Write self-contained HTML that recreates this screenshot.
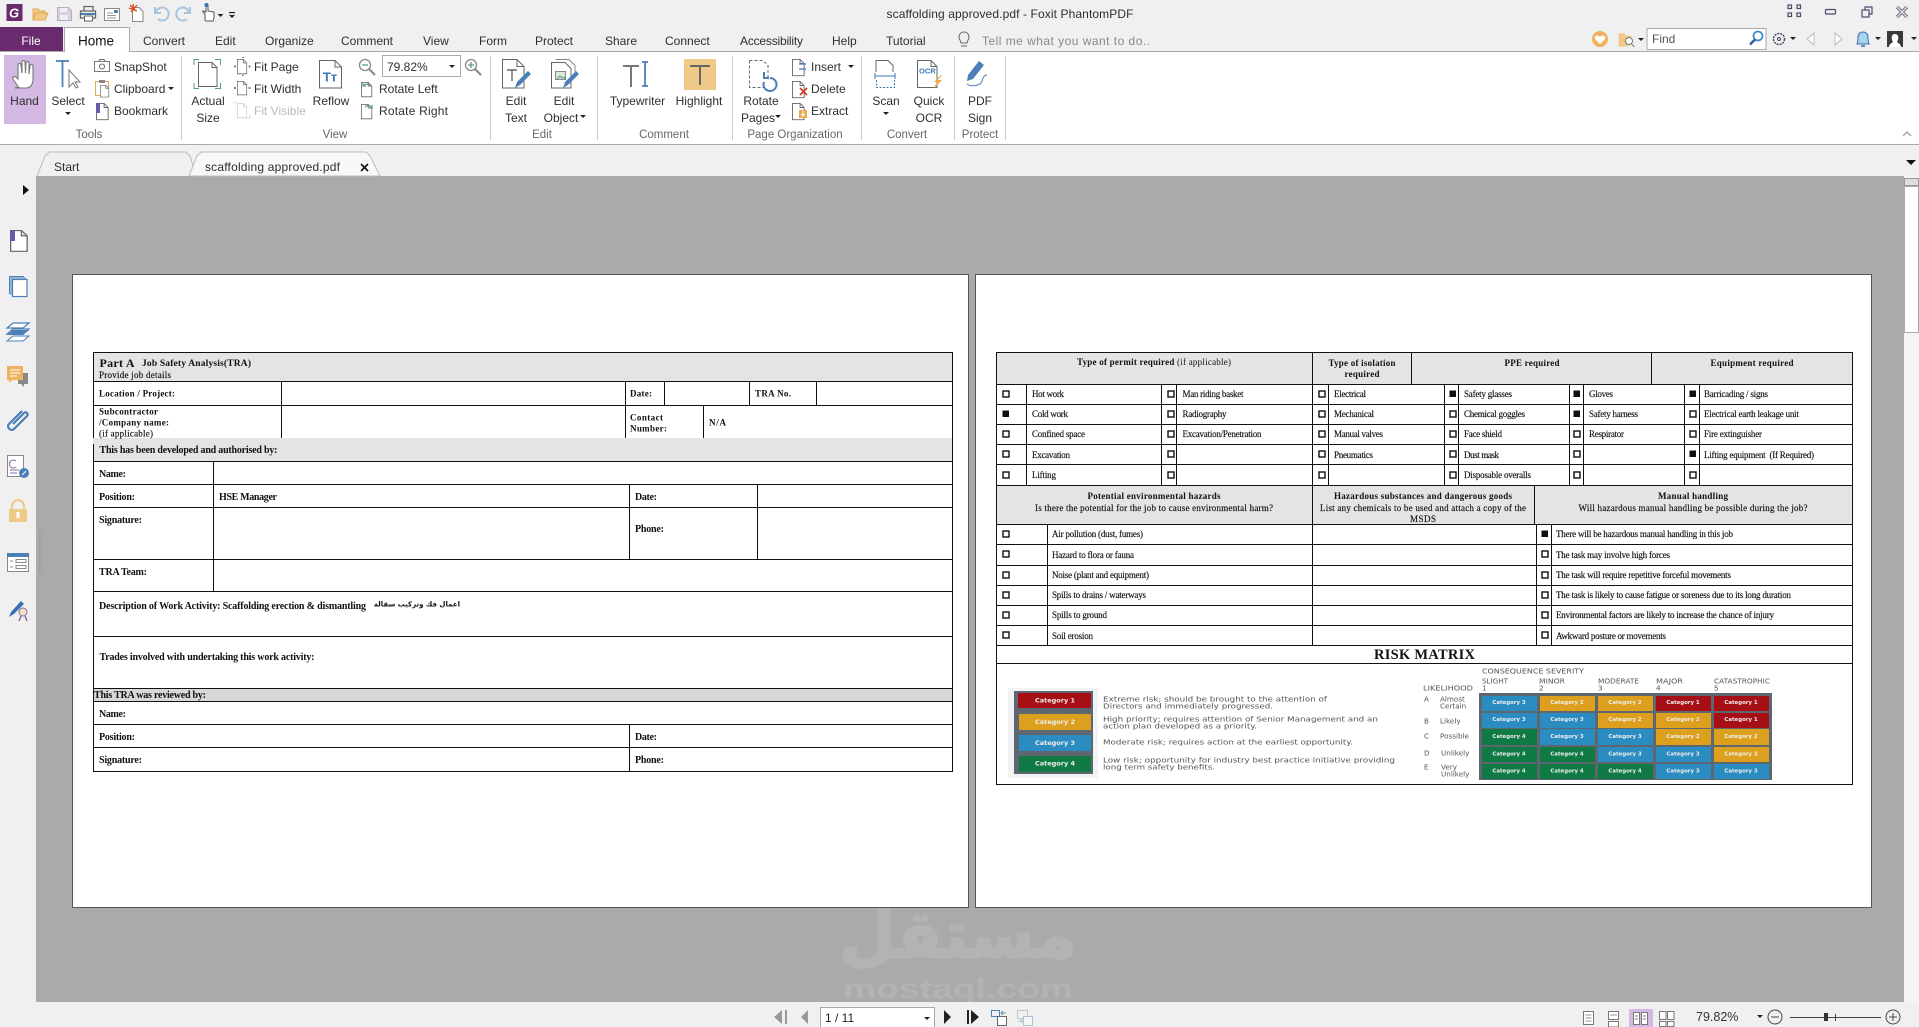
<!DOCTYPE html>
<html lang="en"><head><meta charset="utf-8"><title>scaffolding approved.pdf - Foxit PhantomPDF</title>
<style>
html,body{margin:0;padding:0;background:#f0f0f0;overflow:hidden}
#a{position:relative;width:1919px;height:1027px;overflow:hidden;background:#f0f0f0}
svg{position:absolute;left:0;top:0}
text{white-space:pre}
.u{font:12px "Liberation Sans",sans-serif;fill:#2e2e2e;dominant-baseline:central}
.g{font:11.5px "Liberation Sans",sans-serif;fill:#666;dominant-baseline:central;text-anchor:middle}
text.u[y="40"],text.u[y="66"],text.u[y="88"],text.u[y="110"],text.u[y="100"],text.u[y="117"],text.g[y="134"]{transform:translateY(1px)}
.c{text-anchor:middle}
.b{font:bold 10px "Liberation Serif",serif;fill:#111;dominant-baseline:central}
.r{font:9px "Liberation Serif",serif;fill:#111;dominant-baseline:central;stroke:#111;stroke-width:.15px}
.h{font:bold 9px "Liberation Serif",serif;fill:#111;dominant-baseline:central}
.d{font:7.2px "DejaVu Sans",sans-serif;fill:#555;dominant-baseline:central}
.e{font:bold 5.400px "DejaVu Sans",sans-serif;fill:#eee;dominant-baseline:central;text-anchor:middle}
.l{stroke:#111;stroke-width:1;fill:none}
.k{fill:none;stroke:#111;stroke-width:1.4}
.i{fill:none;stroke:#666;stroke-width:1}
</style></head><body><div id="a">
<svg width="1919" height="1027" viewBox="0 0 1919 1027" xmlns="http://www.w3.org/2000/svg">
<defs>
<path id="doc" d="M.5.5H9L13.5 5V18.5H.5Z M9 .5V5H13.5" fill="#fff" stroke="#666"/>
<path id="tr" d="M0 0h6l-3 3z" fill="#222"/>
<g id="bx"><rect x="-3" y="-3" width="6" height="6" class="k"/></g>
<g id="bf"><rect x="-3.5" y="-3.5" width="6.5" height="6.5" fill="#111"/></g>
<clipPath id="wm"><rect x="36" y="908" width="1868" height="94"/></clipPath>
</defs>

<!-- chrome -->
<rect x="0" y="52" width="1919" height="92" fill="#fff"/>
<rect x="0" y="51" width="1919" height="1" fill="#aaa"/>
<rect x="0" y="144" width="1919" height="1" fill="#aaa"/>
<rect x="36" y="176" width="1868" height="826" fill="#aaa"/>
<rect x="0" y="27" width="63" height="24" fill="#6a2a6e"/>
<path d="M64.500 52V27.500H129.500V52" fill="#fff" stroke="#aaa"/>
<rect x="65" y="50" width="64" height="3" fill="#fff"/>
<text class="u c" x="31" y="40" style="fill:#fff">File</text>
<text class="u c" x="96" y="41" style="font-size:13.500px;fill:#111">Home</text>
<text class="u" x="143" y="40">Convert</text><text class="u" x="215" y="40">Edit</text><text class="u" x="265" y="40">Organize</text><text class="u" x="341" y="40">Comment</text><text class="u" x="423" y="40">View</text><text class="u" x="479" y="40">Form</text><text class="u" x="535" y="40">Protect</text><text class="u" x="605" y="40">Share</text><text class="u" x="665" y="40">Connect</text><text class="u" x="740" y="40" textLength="63">Accessibility</text><text class="u" x="832" y="40">Help</text><text class="u" x="886" y="40">Tutorial</text>
<text class="u" x="982" y="40" style="fill:#888" textLength="168">Tell me what you want to do..</text>
<path d="M961 46h6M960.500 41c-3-4-1-9 3.500-9s6.500 5 3.500 9l-.5 2h-6z" class="i"/>
<text class="u c" x="1010" y="14" textLength="247">scaffolding approved.pdf - Foxit PhantomPDF</text>

<!-- quick access -->
<rect x="6.500" y="4" width="16" height="17" fill="#6a2a6e"/><text x="14" y="13" style="font:italic bold 13px 'Liberation Sans',sans-serif;fill:#fff;dominant-baseline:central;text-anchor:middle">G</text>
<path d="M33 19V9h5l2 2h5v3M33 20l3-7h12l-3 7z" fill="#f2c987" stroke="#e5a955"/>
<path d="M57.500 7.500h11l3 3v10h-14z" fill="#d8cfe0" stroke="#b9a8c8"/><rect x="60" y="8" width="7" height="4" fill="#f0f0f0"/><rect x="60" y="15" width="8" height="5" fill="#f0f0f0"/>
<path d="M84 11V6.500h9V11M84 18h-3.500v-7h15v7H92" fill="#eee" stroke="#666" stroke-width="1.300"/><rect x="81" y="13" width="14" height="2" fill="#4a7fb8"/><rect x="84.500" y="16" width="8" height="5" fill="#fff" stroke="#666"/>
<rect x="104.500" y="8.500" width="15" height="12" fill="#fff" stroke="#888"/><path d="M107 13h6M107 15.500h9M107 18h9" stroke="#999"/><rect x="114" y="10" width="4" height="3" fill="#4a7fb8"/>
<path d="M132.500 7.500H139l4 4v10h-10.500z" fill="#fff" stroke="#888"/><path d="M133 4l1 6M129 8l8 3M137 5l-6 7M130 5l5 5" stroke="#d84a1e" stroke-width="1.300"/>
<path d="M156 12a6.500 6.500 0 1 1 2 7M155 7v6h6" fill="none" stroke="#a9c5dd" stroke-width="2"/>
<path d="M189 12a6.500 6.500 0 1 0-2 7M190 7v6h-6" fill="none" stroke="#a9c5dd" stroke-width="2"/>
<path d="M205 20v-6l-2-2v-1l3 1V5h2v6l6 1v6l-1 3h-7z" fill="#fff" stroke="#555"/><circle cx="206.500" cy="5" r="2" fill="#3a6fb0"/>
<use href="#tr" x="217.500" y="14"/><use href="#tr" x="229" y="15"/><rect x="229" y="12" width="6" height="1.200" fill="#222"/>

<!-- ribbon -->
<rect x="4" y="55" width="42" height="69" fill="#d4b8e4"/>
<path d="M19 88l-6-9c-1-2 1-3 3-2l2 2V65c0-2 3-2 3 0l1 8V62c0-2 3-2 3 0l.5 11 .5-10c0-2 3-2 3 0l0 11 1-8c0-2 3-2 3 0v13c0 6-3 9-7 9h-5c-2 0-4-1-6-0z" fill="#fff" stroke="#777" stroke-width="1.100"/>
<text class="u c" x="24.500" y="100">Hand</text>
<path d="M56 61h13M62.500 61v26" stroke="#4a7fb8" stroke-width="1.800" fill="none"/><path d="M69 70v17l4-4 3 5 2-1-3-5h5z" fill="#fff" stroke="#777"/>
<text class="u c" x="68" y="100">Select</text><use href="#tr" x="65" y="112"/>
<rect x="94.500" y="61.500" width="15" height="10" fill="#fff" stroke="#777"/><circle cx="102" cy="66.500" r="2.500" class="i"/><path d="M99 61.500l1-2h4l1 2" class="i"/>
<rect x="95.500" y="81.500" width="13" height="14" fill="#fff" stroke="#e5a955"/><rect x="99" y="80" width="6" height="3" fill="#888"/><use href="#doc" transform="translate(100 85) scale(.65)"/>
<use href="#doc" transform="translate(96 103) scale(.9)"/><rect x="96" y="103" width="4" height="10" fill="#6b5aa8"/>
<text class="u" x="114" y="66">SnapShot</text><text class="u" x="114" y="88">Clipboard</text><use href="#tr" x="168" y="87"/><text class="u" x="114" y="110">Bookmark</text>
<text class="g" x="89" y="134">Tools</text>
<path d="M181.500 56v84M490.500 56v84M597.500 56v84M732.500 56v84M861.500 56v84M954.500 56v84M1005.500 56v84" stroke="#ccc"/>

<path d="M194 65v-5.500h5M215 59.500h5.500v5.500M194 83v5.500h5M220.500 83v5.500H215" fill="none" stroke="#5a9a8a"/>
<path d="M198.500 62.500H212l5 5v19h-18.500z M212 62.500v5h5" fill="#fff" stroke="#666"/>
<text class="u c" x="208" y="100">Actual</text><text class="u c" x="208" y="117">Size</text>
<use href="#doc" transform="translate(237 59) scale(.72 .8)"/><path d="M234 66.500h2M248.500 66.500h2M243 58v-1M243 75v1" stroke="#5a9a8a" stroke-width="2"/>
<use href="#doc" transform="translate(237 81) scale(.72 .75)"/><path d="M234 88h2M248.500 88h2" stroke="#5a9a8a" stroke-width="2"/>
<g opacity=".3"><use href="#doc" transform="translate(237 103) scale(.72 .8)"/><path d="M234 102v3M234 102h3M250 118v-3M250 118h-3" stroke="#5a9a8a" fill="none"/></g>
<text class="u" x="254" y="66">Fit Page</text><text class="u" x="254" y="88">Fit Width</text><text class="u" x="254" y="110" style="fill:#bbb">Fit Visible</text>
<path d="M319.500 60.500H335l6.500 6.500v21h-22z M335 60.500V67h6.500" fill="#fff" stroke="#666"/>
<text x="330" y="77" style="font:bold 13px 'Liberation Sans',sans-serif;fill:#3a78b5;dominant-baseline:central;text-anchor:middle">Tт</text>
<text class="u c" x="331" y="100">Reflow</text>
<circle cx="365" cy="65" r="5.500" fill="#fff" stroke="#888" stroke-width="1.300"/><path d="M369 69l6 6" stroke="#888" stroke-width="2"/><path d="M362 65h6" stroke="#5a9a8a" stroke-width="1.300"/>
<rect x="382.500" y="55.500" width="78" height="21" fill="#fff" stroke="#aaa"/><text class="u" x="387" y="66">79.82%</text><use href="#tr" x="449" y="65"/>
<circle cx="471" cy="65" r="5.500" fill="#fff" stroke="#888" stroke-width="1.300"/><path d="M475 69l6 6" stroke="#888" stroke-width="2"/><path d="M468 65h6M471 62v6" stroke="#5a9a8a" stroke-width="1.300"/>
<use href="#doc" transform="translate(361 82) scale(.8)"/><path d="M364 85a4 4 0 0 1 6 1M363 83v3h3" fill="none" stroke="#5a9a8a" stroke-width="1.200"/>
<use href="#doc" transform="translate(361 104) scale(.8)"/><path d="M371 107a4 4 0 0 0-6 0M372 105v3h-3" fill="none" stroke="#5a9a8a" stroke-width="1.200"/>
<text class="u" x="379" y="88">Rotate Left</text><text class="u" x="379" y="110" textLength="69">Rotate Right</text>
<text class="g" x="335" y="134">View</text>
<path d="M502.500 59.500H517l7 7V88h-21.500z M517 59.500v7h7" fill="#fff" stroke="#666"/><path d="M507 70h10M512 70v11" stroke="#666" stroke-width="1.400" fill="none"/><path d="M515 88l2-6 11-11 3 3-11 11z" fill="#4a7fb8"/>
<path d="M551.500 62.500H565l6 6V88h-19.500z" fill="#fff" stroke="#666"/><path d="M555.500 59.500H569l6 6v8" fill="none" stroke="#888"/><rect x="555.500" y="71.500" width="10" height="8" fill="#dce8d8" stroke="#888"/><path d="M557 79l3-3 2 2 2-1 1 2" stroke="#5a9a8a" fill="none"/><path d="M563 88l2-6 11-11 3 3-11 11z" fill="#4a7fb8"/>
<text class="u c" x="516" y="100">Edit</text><text class="u c" x="516" y="117">Text</text><text class="u c" x="564" y="100">Edit</text><text class="u c" x="561" y="117">Object</text><use href="#tr" x="580" y="115"/>
<text class="g" x="542" y="134">Edit</text>
<path d="M623 66h16M631 66v21" stroke="#777" stroke-width="2" fill="none"/><path d="M642 62h6M645 62v24M642 86h6" stroke="#4a7fb8" stroke-width="1.800" fill="none"/>
<text class="u c" x="637.500" y="100">Typewriter</text>
<rect x="684" y="59" width="32" height="31" fill="#eec987"/><path d="M690 66h20M700 66v19" stroke="#666" stroke-width="2" fill="none"/>
<text class="u c" x="699" y="100">Highlight</text>
<text class="g" x="664" y="134">Comment</text>
<path d="M749.500 60.500H763l5 5v14M749.500 60.500V87.500h14" fill="none" stroke="#666" stroke-dasharray="3 2"/><path d="M770 78a6.500 6.500 0 1 1-6 4M764 72v6h5" fill="none" stroke="#4a7fb8" stroke-width="2"/>
<text class="u c" x="761" y="100">Rotate</text><text class="u c" x="758" y="117">Pages</text><use href="#tr" x="775" y="115"/>
<use href="#doc" transform="translate(792 59) scale(.9)"/><path d="M799 64h7M799 69h7" stroke="#3a78b5" stroke-width="1.200"/>
<use href="#doc" transform="translate(792 81) scale(.9)"/><path d="M800 88l7 7M807 88l-7 7" stroke="#c83a1e" stroke-width="1.600"/>
<use href="#doc" transform="translate(792 103) scale(.9)"/><rect x="799" y="110" width="8" height="8" fill="#eba94b"/><path d="M803 111v5M801 114l2 2 2-2" stroke="#fff" fill="none"/>
<text class="u" x="811" y="66">Insert</text><use href="#tr" x="848" y="65"/><text class="u" x="811" y="88">Delete</text><text class="u" x="811" y="110">Extract</text>
<text class="g" x="795" y="134">Page Organization</text>
<path d="M876 72V60.500h12l5 5V72" fill="#fff" stroke="#666"/><path d="M875 76h20M875 73v6M895 73v6" stroke="#3a78b5"/><path d="M876.500 80v7.500h18V80" fill="none" stroke="#3a78b5" stroke-dasharray="2 1.500"/>
<text class="u c" x="886" y="100">Scan</text><use href="#tr" x="883" y="112"/>
<path d="M917.500 60.500H931l6 6v21h-19.500z M931 60.500v6h6" fill="#fff" stroke="#666"/>
<text x="919" y="71" style="font:bold 7.500px 'Liberation Sans',sans-serif;fill:#3a78b5;dominant-baseline:central">OCR</text>
<path d="M941 75l-7 7h3l-4 7 9-9h-4l4-5z" fill="#eba94b"/>
<text class="u c" x="929" y="100">Quick</text><text class="u c" x="929" y="117">OCR</text>
<text class="g" x="907" y="134">Convert</text>
<path d="M967 81l1-6 11-14 5 4-11 14z" fill="#4a7fb8"/><path d="M967 84c4 3 14 2 15-3 1-4 3-6 5-6" fill="none" stroke="#4a7fb8"/>
<text class="u c" x="980" y="100">PDF</text><text class="u c" x="980" y="117">Sign</text>
<text class="g" x="980" y="134">Protect</text>

<!-- right top -->
<g fill="none" stroke="#4a4a6a" stroke-width="1.200"><rect x="1788" y="5" width="3.500" height="3.500"/><rect x="1797" y="5" width="3.500" height="3.500"/><rect x="1788" y="13" width="3.500" height="3.500"/><rect x="1797" y="13" width="3.500" height="3.500"/>
<rect x="1825.500" y="9.500" width="10" height="4.500" rx="1"/><rect x="1862" y="10" width="7" height="7"/><path d="M1865 10V7h7v7h-3"/></g>
<path d="M1897 7l10 10M1907 7l-10 10" stroke-width="3.200" stroke="#6a6a7a" fill="none"/><path d="M1897 7l10 10M1907 7l-10 10" stroke-width="1.200" stroke="#eee" fill="none"/>
<circle cx="1600" cy="39" r="8" fill="#eeb35c"/><path d="M1600 44l-5-5c-1.500-3 3-5 5-2 2-3 6.500-1 5 2z" fill="#fff"/>
<path d="M1618.500 33.500h6l1 2h6v7h-3v4h-10z" fill="#f2c987"/><circle cx="1629" cy="41" r="3.500" fill="#fff" stroke="#777"/><path d="M1631.500 44l3 3" stroke="#777"/>
<use href="#tr" x="1638" y="38"/>
<rect x="1647" y="28.500" width="119" height="21" fill="#fff" stroke="#aaa"/><text class="u" x="1652" y="39" style="fill:#555">Find</text>
<circle cx="1758" cy="36" r="4.500" fill="#fff" stroke="#3a8fd0" stroke-width="1.800"/><path d="M1755 39.500l-5 5" stroke="#2a5f9e" stroke-width="2.400"/>
<circle cx="1779" cy="39" r="5.500" fill="none" stroke="#4a4a6a" stroke-dasharray="2 1" stroke-width="1.500"/><circle cx="1779" cy="39" r="1.500" fill="none" stroke="#4a4a6a"/><use href="#tr" x="1790" y="37"/>
<path d="M1814 33l-7 6 7 6zM1835 33l7 6-7 6z" fill="#fff" stroke="#bbb"/>
<path d="M1857 44c1-2 1-5 1-7 0-3 2-5 5-5s5 2 5 5c0 2 0 5 1 7z" fill="#a8d4ee" stroke="#3a6fb0"/><path d="M1861 46h4" stroke="#3a6fb0" stroke-width="1.500"/><use href="#tr" x="1875" y="37"/>
<rect x="1887" y="31" width="16" height="16" fill="#3a3a3a"/><path d="M1889 47c0-3 3-4 4-5-2-3-2-8 2-8s4 5 2 8c1 1 4 2 4 5z" fill="#fff"/><use href="#tr" x="1911" y="37"/>
<path d="M1903 136l4-4 4 4" fill="none" stroke="#aaa" stroke-width="1.500"/>
<path d="M1906 160h10l-5 5z" fill="#111"/>

<!-- tabs -->
<path d="M37 176l8-20 4-4H186l4 4 6 20" fill="#f0f0f0" stroke="#bbb"/>
<path d="M189 176l8-20 4-4H366l4 4 10 20z" fill="#f8f8f8" stroke="#bbb"/>
<text class="u" x="54" y="167">Start</text><text class="u" x="205" y="167" textLength="135">scaffolding approved.pdf</text>
<path d="M361 164l7 7M368 164l-7 7" stroke="#111" stroke-width="1.600"/>

<!-- left panel -->
<path d="M23 185l6 5-6 5z" fill="#111"/>
<use href="#doc" transform="translate(10 230) scale(1.270 1.150)"/><rect x="10" y="230" width="5" height="11" fill="#6b5aa8"/>
<rect x="12.500" y="279.500" width="14.500" height="17" fill="#fff" stroke="#4a7fb8" stroke-width="1.200"/><path d="M11 295V278h15M9.500 294V276.500H24" fill="none" stroke="#4a7fb8" stroke-width="1"/>
<path d="M13 323h16l-6 5H7zM13 329h16l-6 5H7z" fill="#fff" stroke="#4a7fb8" stroke-width="1.200"/><path d="M13 330h16l-6 5H7z" fill="#4a7fb8"/><path d="M13 336h16l-6 5H7z" fill="#fff" stroke="#4a7fb8"/>
<rect x="18" y="373" width="10" height="11" fill="#888"/><path d="M24 384v3l-3-3z" fill="#888"/><path d="M7 366h16v14H12l-3 3v-3H7z" fill="#eeb35c"/><path d="M10 370h10M10 373h10M10 376h7" stroke="#fff"/>
<path d="M13 424l11-11c2-2 5 1 3 3l-13 13c-3 3-8-2-5-5l13-13" fill="none" stroke="#4a7fb8" stroke-width="2.200"/>
<rect x="7.500" y="455.500" width="16" height="21" fill="#fff" stroke="#888"/><path d="M16 461a4 4 0 1 0 0 6M10 470h9M10 473h7" fill="none" stroke="#8a6ba8"/><circle cx="24" cy="473" r="5" fill="#4a7fb8"/><path d="M22 475l4-4" stroke="#fff"/>
<path d="M12 510v-4a6 6 0 0 1 12 0v4" fill="none" stroke="#eec987" stroke-width="2"/><rect x="9" y="509" width="18" height="13" fill="#eec987"/><rect x="16.500" y="512" width="3" height="6" fill="#fff"/>
<rect x="7.500" y="553.500" width="21" height="18" fill="#fff" stroke="#888"/><rect x="7" y="553" width="22" height="4" fill="#4a7fb8"/><path d="M10 561h3M10 567h3" stroke="#888"/><rect x="16" y="559.500" width="10" height="3" fill="none" stroke="#888"/><rect x="16" y="565.500" width="10" height="3" fill="none" stroke="#888"/>
<path d="M9 617l2-5 10-11 3 3-10 10z" fill="#3a6fb0"/><circle cx="23" cy="612" r="4" fill="#f0e0c0" stroke="#8a6ba8"/><path d="M19 621l2-5M27 621l-2-5" stroke="#8a6ba8" stroke-width="1.500"/>
<path d="M39.500 530v43M41.500 530v43" stroke="#888" stroke-dasharray="1 1" opacity=".7"/>

<!-- scrollbar -->
<rect x="1904" y="176" width="15" height="826" fill="#f4f4f4"/><rect x="1904.500" y="178.500" width="14" height="7" fill="#ddd" stroke="#999"/><rect x="1904.500" y="186.500" width="14" height="146" fill="#fff" stroke="#aaa"/>

<!-- pages -->
<rect x="72.500" y="274.500" width="896" height="633" fill="#fff" stroke="#555"/>
<rect x="975.500" y="274.500" width="896" height="633" fill="#fff" stroke="#555"/>

<!-- left table -->
<rect x="93" y="352" width="859" height="29" fill="#e4e4e4"/><rect x="93" y="438" width="859" height="23" fill="#e4e4e4"/><rect x="93" y="688" width="859" height="13" fill="#d8d8d8"/>
<path class="l" d="M93.500 352V771.500H952.500V352.500H93.500M93.500 381.500H952.500M93.500 405.500H952.500M93.500 461.500H952.500M93.500 484.500H952.500M93.500 507.500H952.500M93.500 559.500H952.500M93.500 591.500H952.500M93.500 636.500H952.500M93.500 688.500H952.500M93.500 701.500H952.500M93.500 724.500H952.500M93.500 747.500H952.500M281.500 381V438M625.500 381V438M664.500 381V405M749.500 381V405M816.500 381V405M703.500 405V438M213.500 461V591M629.500 484V559M757.500 484V559M629.500 724V771"/>
<rect x="93" y="438" width="1.500" height="6" fill="#e4e4e4"/>
<text class="b" x="99.500" y="363" style="font-size:12px" textLength="35">Part A</text>
<text class="b" x="142" y="364" textLength="109" style="font-size:9.500px">Job Safety Analysis(TRA)</text>
<text class="r" x="99" y="375" textLength="72">Provide job details</text>
<g transform="translate(0 .6)">
<text class="b" x="99" y="393" textLength="76" style="font-size:9px">Location / Project:</text>
<text class="b" x="99" y="411" textLength="59" style="font-size:9px">Subcontractor</text>
<text class="b" x="99" y="422" textLength="70" style="font-size:9px">/Company name:</text>
<text class="r" x="99" y="433" textLength="54">(if applicable)</text>
<text class="b" x="630" y="393" textLength="22" style="font-size:9px">Date:</text>
<text class="b" x="755" y="393" textLength="36" style="font-size:9px">TRA No.</text>
<text class="b" x="630" y="417" textLength="33" style="font-size:9px">Contact</text>
<text class="b" x="630" y="428" textLength="37" style="font-size:9px">Number:</text>
<text class="b" x="709" y="422" textLength="17" style="font-size:9px">N/A</text>
<text class="b" x="99.500" y="450" textLength="178">This has been developed and authorised by:</text>
<text class="b" x="99" y="474" textLength="27">Name:</text>
<text class="b" x="99" y="497" textLength="36">Position:</text>
<text class="b" x="219" y="497" textLength="58">HSE Manager</text>
<text class="b" x="99" y="520" textLength="43">Signature:</text>
<text class="b" x="99" y="572" textLength="48">TRA Team:</text>
<text class="b" x="635" y="497" textLength="22">Date:</text>
<text class="b" x="635" y="529" textLength="29">Phone:</text>
<text class="b" x="99" y="606" textLength="267">Description of Work Activity: Scaffolding erection &amp; dismantling</text>
<text x="460" y="604" direction="rtl" style="font:bold 7px 'DejaVu Sans',sans-serif;fill:#111;dominant-baseline:central;text-anchor:start;direction:rtl">اعمال فك وتركيب سقالة</text>
<text class="b" x="99.500" y="657" textLength="215">Trades involved with undertaking this work activity:</text>
<text class="b" x="94" y="695" textLength="112">This TRA was reviewed by:</text>
<text class="b" x="99" y="714" textLength="27">Name:</text>
<text class="b" x="99" y="737" textLength="36">Position:</text>
<text class="b" x="99" y="760" textLength="43">Signature:</text>
<text class="b" x="635" y="737" textLength="22">Date:</text>
<text class="b" x="635" y="760" textLength="29">Phone:</text>
</g>

<!-- right table -->
<rect x="997" y="352" width="856" height="32" fill="#e4e4e4"/><rect x="997" y="485" width="856" height="39" fill="#e4e4e4"/>
<path class="l" d="M996.500 352.500H1852.500V784.500H996.500ZM996.500 384.500H1852.500M996.500 404.500H1852.500M996.500 424.500H1852.500M996.500 444.500H1852.500M996.500 464.500H1852.500M996.500 485.500H1852.500M996.500 524.500H1852.500M996.500 544.500H1852.500M996.500 565.500H1852.500M996.500 585.500H1852.500M996.500 605.500H1852.500M996.500 625.500H1852.500M996.500 645.500H1852.500M996.500 663.500H1852.500M1312.500 352V645M1411.500 352V384M1651.500 352V384M1026.500 384V485M1161.500 384V485M1176.500 384V485M1328.500 384V485M1444.500 384V485M1458.500 384V485M1569.500 384V485M1583.500 384V485M1684.500 384V485M1699.500 384V485M1534.500 485V524M1047.500 524V645M1536.500 524V645M1551.500 524V645"/>
<text class="h c" x="1154" y="362" textLength="154"><tspan>Type of permit required </tspan><tspan style="font-weight:400">(if applicable)</tspan></text>
<text class="h c" x="1362" y="363" textLength="67">Type of isolation</text><text class="h c" x="1362" y="374" textLength="35">required</text>
<text class="h c" x="1532" y="363" textLength="55">PPE required</text><text class="h c" x="1752" y="363" textLength="83">Equipment required</text>
<!-- checks -->
<use href="#bx" x="1006" y="394"/><use href="#bf" x="1006" y="414"/><use href="#bx" x="1006" y="434"/><use href="#bx" x="1006" y="454"/><use href="#bx" x="1006" y="475"/>
<use href="#bx" x="1171" y="394"/><use href="#bx" x="1171" y="414"/><use href="#bx" x="1171" y="434"/><use href="#bx" x="1171" y="454"/><use href="#bx" x="1171" y="475"/>
<use href="#bx" x="1322" y="394"/><use href="#bx" x="1322" y="414"/><use href="#bx" x="1322" y="434"/><use href="#bx" x="1322" y="454"/><use href="#bx" x="1322" y="475"/>
<use href="#bf" x="1453" y="394"/><use href="#bx" x="1453" y="414"/><use href="#bx" x="1453" y="434"/><use href="#bx" x="1453" y="454"/><use href="#bx" x="1453" y="475"/>
<use href="#bf" x="1577" y="394"/><use href="#bf" x="1577" y="414"/><use href="#bx" x="1577" y="434"/><use href="#bx" x="1577" y="454"/><use href="#bx" x="1577" y="475"/>
<use href="#bf" x="1693" y="394"/><use href="#bx" x="1693" y="414"/><use href="#bx" x="1693" y="434"/><use href="#bf" x="1693" y="454"/><use href="#bx" x="1693" y="475"/>
<use href="#bx" x="1006" y="534"/><use href="#bx" x="1006" y="554"/><use href="#bx" x="1006" y="575"/><use href="#bx" x="1006" y="595"/><use href="#bx" x="1006" y="615"/><use href="#bx" x="1006" y="635"/>
<use href="#bf" x="1545" y="534"/><use href="#bx" x="1545" y="554"/><use href="#bx" x="1545" y="575"/><use href="#bx" x="1545" y="595"/><use href="#bx" x="1545" y="615"/><use href="#bx" x="1545" y="635"/>
<!-- permit labels -->
<text class="r" x="1032" y="394" textLength="32">Hot work</text><text class="r" x="1032" y="414" textLength="36">Cold work</text><text class="r" x="1032" y="434" textLength="53">Confined space</text><text class="r" x="1032" y="455" textLength="38">Excavation</text><text class="r" x="1032" y="475" textLength="24">Lifting</text>
<text class="r" x="1182.500" y="394" textLength="61">Man riding basket</text><text class="r" x="1182.500" y="414" textLength="44">Radiography</text><text class="r" x="1182.500" y="434" textLength="79">Excavation/Penetration</text>
<text class="r" x="1334" y="394" textLength="32">Electrical</text><text class="r" x="1334" y="414" textLength="40">Mechanical</text><text class="r" x="1334" y="434" textLength="49">Manual valves</text><text class="r" x="1334" y="455" textLength="39">Pneumatics</text>
<text class="r" x="1464" y="394" textLength="48">Safety glasses</text><text class="r" x="1464" y="414" textLength="61">Chemical goggles</text><text class="r" x="1464" y="434" textLength="38">Face shield</text><text class="r" x="1464" y="455" textLength="35">Dust mask</text><text class="r" x="1464" y="475" textLength="67">Disposable overalls</text>
<text class="r" x="1589" y="394" textLength="24">Gloves</text><text class="r" x="1589" y="414" textLength="49">Safety harness</text><text class="r" x="1589" y="434" textLength="35">Respirator</text>
<text class="r" x="1704" y="394" textLength="64">Barricading / signs</text><text class="r" x="1704" y="414" textLength="95">Electrical earth leakage unit</text><text class="r" x="1704" y="434" textLength="58">Fire extinguisher</text><text class="r" x="1704" y="455" textLength="110">Lifting equipment  (If Required)</text>
<!-- section 2 -->
<text class="h c" x="1154" y="496" textLength="133">Potential environmental hazards</text><text class="r c" x="1154" y="508" textLength="238">Is there the potential for the job to cause environmental harm?</text>
<text class="h c" x="1423" y="496" textLength="178">Hazardous substances and dangerous goods</text><text class="r c" x="1423" y="508" textLength="206">List any chemicals to be used and attach a copy of the</text><text class="r c" x="1423" y="519" textLength="26">MSDS</text>
<text class="h c" x="1693" y="496" textLength="70">Manual handling</text><text class="r c" x="1693" y="508" textLength="229">Will hazardous manual handling be possible during the job?</text>
<text class="r" x="1052" y="534" textLength="91">Air pollution (dust, fumes)</text><text class="r" x="1052" y="555" textLength="82">Hazard to flora or fauna</text><text class="r" x="1052" y="575" textLength="97">Noise (plant and equipment)</text><text class="r" x="1052" y="595" textLength="94">Spills to drains / waterways</text><text class="r" x="1052" y="615" textLength="55">Spills to ground</text><text class="r" x="1052" y="636" textLength="41">Soil erosion</text>
<text class="r" x="1556" y="534" textLength="177">There will be hazardous manual handling in this job</text><text class="r" x="1556" y="555" textLength="114">The task may involve high forces</text><text class="r" x="1556" y="575" textLength="175">The task will require repetitive forceful movements</text><text class="r" x="1556" y="595" textLength="235">The task is likely to cause fatigue or soreness due to its long duration</text><text class="r" x="1556" y="615" textLength="218">Environmental factors are likely to increase the chance of injury</text><text class="r" x="1556" y="636" textLength="110">Awkward posture or movements</text>
<text x="1424.500" y="655" style="font:bold 14.500px 'Liberation Serif',serif;fill:#111;dominant-baseline:central;text-anchor:middle" textLength="101">RISK MATRIX</text>

<!-- risk matrix -->
<rect x="1008" y="688" width="90" height="90" fill="#d9dcdf" opacity=".35"/>
<rect x="1014" y="691" width="79" height="83" fill="#5e6770"/>
<rect x="1018" y="693" width="73" height="15" fill="#a50f15"/><rect x="1019" y="714" width="72" height="16" fill="#dca01e"/><rect x="1019" y="735" width="72" height="16" fill="#2a8cc0"/><rect x="1019" y="756" width="72" height="16" fill="#0f7a44"/>
<text class="e" x="1055" y="700.500" style="font-size:6.500px">Category 1</text><text class="e" x="1055" y="722" style="font-size:6.500px">Category 2</text><text class="e" x="1055" y="743" style="font-size:6.500px">Category 3</text><text class="e" x="1055" y="763.500" style="font-size:6.500px">Category 4</text>
<text class="d" x="1103" y="699" textLength="224" lengthAdjust="spacingAndGlyphs">Extreme risk; should be brought to the attention of</text><text class="d" x="1103" y="706" textLength="170" lengthAdjust="spacingAndGlyphs">Directors and immediately progressed.</text>
<text class="d" x="1103" y="719" textLength="275" lengthAdjust="spacingAndGlyphs">High priority; requires attention of Senior Management and an</text><text class="d" x="1103" y="726" textLength="154" lengthAdjust="spacingAndGlyphs">action plan developed as a priority.</text>
<text class="d" x="1103" y="742" textLength="250" lengthAdjust="spacingAndGlyphs">Moderate risk; requires action at the earliest opportunity.</text>
<text class="d" x="1103" y="760" textLength="292" lengthAdjust="spacingAndGlyphs">Low risk; opportunity for industry best practice initiative providing</text><text class="d" x="1103" y="767" textLength="112" lengthAdjust="spacingAndGlyphs">long term safety benefits.</text>
<text class="d" x="1482" y="671" textLength="102" lengthAdjust="spacingAndGlyphs">CONSEQUENCE SEVERITY</text>
<text class="d" x="1482" y="681" textLength="26" lengthAdjust="spacingAndGlyphs">SLIGHT</text><text class="d" x="1482" y="688">1</text><text class="d" x="1539" y="681" textLength="26" lengthAdjust="spacingAndGlyphs">MINOR</text><text class="d" x="1539" y="688">2</text><text class="d" x="1598" y="681" textLength="41" lengthAdjust="spacingAndGlyphs">MODERATE</text><text class="d" x="1598" y="688">3</text><text class="d" x="1656" y="681" textLength="27" lengthAdjust="spacingAndGlyphs">MAJOR</text><text class="d" x="1656" y="688">4</text><text class="d" x="1714" y="681" textLength="56" lengthAdjust="spacingAndGlyphs">CATASTROPHIC</text><text class="d" x="1714" y="688">5</text>
<text class="d" x="1423" y="688" textLength="50" lengthAdjust="spacingAndGlyphs">LIKELIHOOD</text>
<text class="d" x="1424" y="699">A</text><text class="d" x="1440" y="699">Almost</text><text class="d" x="1440" y="706">Certain</text>
<text class="d" x="1424" y="721">B</text><text class="d" x="1440" y="721">Likely</text>
<text class="d" x="1424" y="736">C</text><text class="d" x="1440" y="736">Possible</text>
<text class="d" x="1424" y="753">D</text><text class="d" x="1441" y="753">Unlikely</text>
<text class="d" x="1424" y="767">E</text><text class="d" x="1441" y="767">Very</text><text class="d" x="1441" y="774">Unlikely</text>
<rect x="1479" y="693" width="293" height="87" fill="#5e6770"/>
<g>
<rect x="1482" y="696" width="55" height="15" fill="#2a8cc0"/><rect x="1540" y="696" width="55" height="15" fill="#dca01e"/><rect x="1598" y="696" width="55" height="15" fill="#dca01e"/><rect x="1656" y="696" width="55" height="15" fill="#a50f15"/><rect x="1714" y="696" width="55" height="15" fill="#a50f15"/>
<rect x="1482" y="713" width="55" height="15" fill="#2a8cc0"/><rect x="1540" y="713" width="55" height="15" fill="#2a8cc0"/><rect x="1598" y="713" width="55" height="15" fill="#dca01e"/><rect x="1656" y="713" width="55" height="15" fill="#dca01e"/><rect x="1714" y="713" width="55" height="15" fill="#a50f15"/>
<rect x="1482" y="729" width="55" height="16" fill="#0f7a44"/><rect x="1540" y="729" width="55" height="16" fill="#2a8cc0"/><rect x="1598" y="729" width="55" height="16" fill="#2a8cc0"/><rect x="1656" y="729" width="55" height="16" fill="#dca01e"/><rect x="1714" y="729" width="55" height="16" fill="#dca01e"/>
<rect x="1482" y="747" width="55" height="15" fill="#0f7a44"/><rect x="1540" y="747" width="55" height="15" fill="#0f7a44"/><rect x="1598" y="747" width="55" height="15" fill="#2a8cc0"/><rect x="1656" y="747" width="55" height="15" fill="#2a8cc0"/><rect x="1714" y="747" width="55" height="15" fill="#dca01e"/>
<rect x="1482" y="764" width="55" height="15" fill="#0f7a44"/><rect x="1540" y="764" width="55" height="15" fill="#0f7a44"/><rect x="1598" y="764" width="55" height="15" fill="#0f7a44"/><rect x="1656" y="764" width="55" height="15" fill="#2a8cc0"/><rect x="1714" y="764" width="55" height="15" fill="#2a8cc0"/>
</g>
<text class="e" x="1509" y="703">Category 3</text><text class="e" x="1567" y="703">Category 2</text><text class="e" x="1625" y="703">Category 2</text><text class="e" x="1683" y="703">Category 1</text><text class="e" x="1741" y="703">Category 1</text>
<text class="e" x="1509" y="720">Category 3</text><text class="e" x="1567" y="720">Category 3</text><text class="e" x="1625" y="720">Category 2</text><text class="e" x="1683" y="720">Category 2</text><text class="e" x="1741" y="720">Category 1</text>
<text class="e" x="1509" y="737">Category 4</text><text class="e" x="1567" y="737">Category 3</text><text class="e" x="1625" y="737">Category 3</text><text class="e" x="1683" y="737">Category 2</text><text class="e" x="1741" y="737">Category 2</text>
<text class="e" x="1509" y="754.500">Category 4</text><text class="e" x="1567" y="754.500">Category 4</text><text class="e" x="1625" y="754.500">Category 3</text><text class="e" x="1683" y="754.500">Category 3</text><text class="e" x="1741" y="754.500">Category 2</text>
<text class="e" x="1509" y="771.500">Category 4</text><text class="e" x="1567" y="771.500">Category 4</text><text class="e" x="1625" y="771.500">Category 4</text><text class="e" x="1683" y="771.500">Category 3</text><text class="e" x="1741" y="771.500">Category 3</text>

<!-- watermark -->
<g clip-path="url(#wm)">
<text x="958" y="936" direction="rtl" style="font:bold 65px 'DejaVu Sans',sans-serif;fill:#b3b3b3;stroke:#b3b3b3;stroke-width:2px;stroke-linejoin:round;dominant-baseline:central;text-anchor:middle;direction:rtl">مستقل</text>
<text x="843" y="998" style="font:bold 28px 'Liberation Sans',sans-serif;fill:#b3b3b3" textLength="230" lengthAdjust="spacingAndGlyphs">mostaql.com</text>
</g>

<!-- status bar -->
<rect x="0" y="1002" width="1919" height="25" fill="#f0f0f0"/>
<path d="M782 1010l-8 7 8 7zM785 1010h2v14h-2zM808 1010l-7 7 7 7z" fill="#999"/>
<rect x="820.500" y="1007.500" width="114" height="22" fill="#fff" stroke="#aaa"/><text class="u" x="825" y="1018" style="fill:#222">1 / 11</text><use href="#tr" x="924" y="1017"/>
<path d="M944 1010l7 7-7 7zM967 1010h2v14h-2zM971 1010l8 7-8 7z" fill="#222"/>
<rect x="991.500" y="1010.500" width="8" height="6" fill="none" stroke="#4a7fb8"/><rect x="997.500" y="1016.500" width="9" height="9" fill="#fff" stroke="#666"/><path d="M1006 1013h-5M1003 1011l-2 2 2 2" stroke="#5a9a8a" fill="none"/>
<g opacity=".4"><rect x="1017.500" y="1010.500" width="10" height="8" fill="none" stroke="#888"/><rect x="1023.500" y="1016.500" width="9" height="9" fill="#fff" stroke="#4a7fb8"/><path d="M1018 1021h5M1021 1019l2 2-2 2" stroke="#5a9a8a" fill="none"/></g>
<rect x="1583.500" y="1011.500" width="10" height="13" fill="#fff" stroke="#777"/><path d="M1585.500 1015h6M1585.500 1018h6M1585.500 1021h6" stroke="#999"/>
<path d="M1608.500 1011.500h10v8h-10zM1608.500 1021.500h10v5.500h-10z" fill="#fff" stroke="#777"/><path d="M1610 1015h7" stroke="#999"/>
<rect x="1629" y="1009" width="24" height="18" fill="#d4b8e4"/><path d="M1633.500 1012.500h6v12h-6zM1641.500 1012.500h6v12h-6zM1635 1016h3M1635 1019h3M1643 1016h3M1643 1019h3" fill="#fff" stroke="#777"/>
<path d="M1659.500 1011.500h6.500v8h-6.500zM1667.500 1011.500h6.500v8h-6.500zM1659.500 1021.500h6.500v5h-6.500zM1667.500 1021.500h6.500v5h-6.500z" fill="#fff" stroke="#777"/>
<text class="u" x="1696" y="1017" style="fill:#333;font-size:12.500px">79.82%</text><use href="#tr" x="1757" y="1015"/>
<circle cx="1775" cy="1017" r="7" fill="none" stroke="#444"/><path d="M1771 1017h8" stroke="#444"/>
<path d="M1790 1017.500h91" stroke="#444"/><rect x="1824" y="1013" width="4" height="8" fill="#333"/><path d="M1835.500 1014v7" stroke="#444"/>
<circle cx="1893" cy="1017" r="7" fill="none" stroke="#444"/><path d="M1889 1017h8M1893 1013v8" stroke="#444"/>
</svg>
</div></body></html>
